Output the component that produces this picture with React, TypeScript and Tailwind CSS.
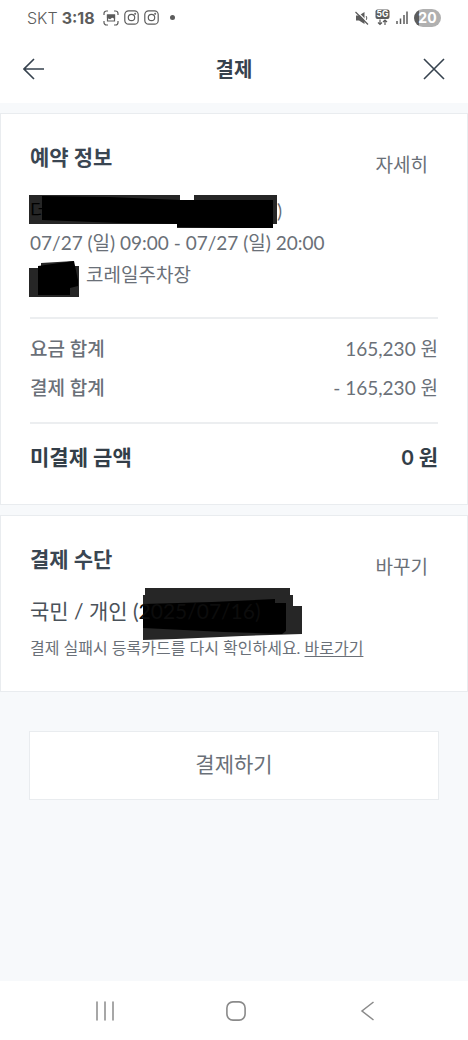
import React, { ReactNode } from 'react';

const fees = [
  { label: '요금 합계', amount: '165,230 원' },
  { label: '결제 합계', amount: '- 165,230 원' },
];

function StatusBar() {
  return (
    <div className="flex h-[35px] items-center justify-between px-[27px] text-[#5c5c5c] font-['Inter','Noto_Sans_CJK_KR',sans-serif]">
      <div className="flex items-center text-base">
        <span className="font-light">SKT</span>
        <span className="ml-1 font-bold">3:18</span>
        <svg className="ml-2" width="16" height="16" viewBox="0 0 16 16" fill="none" stroke="currentColor" strokeWidth="1.2">
          <path d="M1 5V3.5A2.5 2.5 0 0 1 3.5 1H5M11 1h1.5A2.5 2.5 0 0 1 15 3.5V5M15 11v1.5a2.5 2.5 0 0 1-2.5 2.5H11M5 15H3.5A2.5 2.5 0 0 1 1 12.5V11" />
          <path d="M4.5 5h7v6h-7z" />
          <path d="M4.5 5h7v3l-2.5-1-2 1.500-2.500-1z" fill="currentColor" />
        </svg>
        <InstagramIcon className="ml-[5px]" />
        <InstagramIcon className="ml-[5px]" />
        <span className="ml-[11px] h-[5px] w-[5px] rounded-full bg-[#5c5c5c]" />
      </div>
      <div className="flex items-center">
        <svg width="14" height="14" viewBox="0 0 14 14">
          <path d="M1 4.500h3L9.500 1v12L4 9.500H1z" fill="currentColor" />
          <path d="M11 5c1 1 1 3 0 4" stroke="currentColor" fill="none" />
          <path d="M2 0.500l12 12" stroke="#fff" strokeWidth="1.200" />
          <path d="M0.500 1l12.500 12.500" stroke="currentColor" strokeWidth="1.300" />
        </svg>
        <svg className="ml-[6px]" width="15" height="17" viewBox="0 0 15 17">
          <rect x="0.500" y="0.500" width="14" height="9.500" rx="2" fill="currentColor" />
          <text x="7.500" y="8.300" textAnchor="middle" fontSize="8.500" fontWeight="700" fill="#fff">5G</text>
          <path d="M5 10.500v5M3 13.500l2 2 2-2M10 16v-5M8 13l2-2 2 2" stroke="currentColor" fill="none" strokeWidth="1.200" />
        </svg>
        <svg className="ml-[6px]" width="12" height="13" viewBox="0 0 12 13" stroke="currentColor" strokeWidth="1.500">
          <path d="M1 10v3M4.500 7.500V13M8 4v9M11 0.500V13" />
        </svg>
        <div className="ml-[6px] flex h-[18px] w-[27px] items-center justify-center rounded-full bg-linear-to-r from-[#5c5c5c] from-20% to-[#b0b0b0] to-20% text-sm font-bold text-white">
          20
        </div>
      </div>
    </div>
  );
}

function InstagramIcon({ className }: { className?: string }) {
  return (
    <svg className={className} width="15" height="15" viewBox="0 0 15 15" fill="none" stroke="currentColor" strokeWidth="1.2">
      <rect x="0.8" y="0.8" width="13.4" height="13.4" rx="3.8" />
      <circle cx="7.5" cy="7.5" r="3.2" />
      <circle cx="11.2" cy="3.8" r="0.4" fill="currentColor" />
    </svg>
  );
}

function Card({ title, action, children }: { title: string; action: string; children: ReactNode }) {
  return (
    <section className="mt-[10px] border border-[#e9ecef] bg-white px-[29px] pt-[27px]">
      <div className="flex items-start justify-between">
        <h2 className="text-[21px] leading-8 font-bold text-[#3a4652]">{title}</h2>
        <button type="button" className="mt-2 px-[10px] text-[19px] leading-8">{action}</button>
      </div>
      {children}
    </section>
  );
}

export default function App() {
  return (
    <div className="flex min-h-screen flex-col bg-[#f7f9fb] text-[#6a7078] font-['Lato','Noto_Sans_CJK_KR',sans-serif]">
      <div className="bg-white">
        <StatusBar />
        <header className="flex h-[68px] items-center justify-between px-[23px] text-[#36424e]">
          <button type="button" aria-label="뒤로">
            <svg width="22" height="22" viewBox="0 0 22 22" fill="none" stroke="currentColor" strokeWidth="1.6">
              <path d="M21 11H1M11 1L1 11l10 10" />
            </svg>
          </button>
          <h1 className="text-[20px] leading-8 font-bold">결제</h1>
          <button type="button" aria-label="닫기">
            <svg width="22" height="22" viewBox="0 0 22 22" fill="none" stroke="currentColor" strokeWidth="1.6">
              <path d="M1 1l20 20M21 1L1 21" />
            </svg>
          </button>
        </header>
      </div>

      <main className="flex-1">
        <Card title="예약 정보" action="자세히">
          <div className="mt-[14px] text-[19px] leading-8">
            <p className="relative flex">
              <svg className="absolute top-0 -left-px" width="249" height="34" viewBox="0 0 249 34">
                <path d="M0 0H151V5H165V0H248V29H244V33H148V29H0z" fill="#262626" />
                <path d="M13 1L80 2L151 5H244V33H205L148 32V29L90 28L13 25z" fill="#000" />
              </svg>
              <span className="relative w-[247px] text-black">더</span>
              <span>)</span>
            </p>
            <p>07/27 (일) 09:00 - 07/27 (일) 20:00</p>
            <p className="relative flex">
              <svg className="absolute top-[2px] -left-px" width="51" height="37" viewBox="0 0 51 37">
                <path d="M0 7H12V2L45 0V5H50V36H0z" fill="#262626" />
                <path d="M9 5L45 0L49 19V25L41 27V34H9z" fill="#000" />
              </svg>
              <span className="ml-[56px]">코레일주차장</span>
            </p>
          </div>

          <dl className="mt-[26px] border-t-2 border-[#eceef0] text-[19px] leading-[39px]">
            <div className="border-b-2 border-[#eceef0] pt-[10px] pb-[15px]">
              {fees.map((fee) => (
                <div className="flex justify-between" key={fee.label}>
                  <dt className="font-medium">{fee.label}</dt>
                  <dd>{fee.amount}</dd>
                </div>
              ))}
            </div>
            <div className="flex justify-between pt-[13px] pb-[28px] text-[21px] font-bold text-[#333e48]">
              <dt>미결제 금액</dt>
              <dd>0 원</dd>
            </div>
          </dl>
        </Card>

        <Card title="결제 수단" action="바꾸기">
          <p className="relative mt-[12px] flex text-[21px] leading-8 text-[#4a525a]">
            <svg className="absolute -top-[7px] left-[112px]" width="161" height="52" viewBox="0 0 161 52">
              <path d="M3 0H148V7H151V18H160V46L100 48L34 51L1 52V7H3z" fill="#262626" />
              <path d="M1 16L70 14L133 11V15H144V43L140 46L82 44L1 40z" fill="#000" />
            </svg>
            <span className="relative">
              국민 / 개인 (<span className="text-[#0c0c0c]">2025/07/16)</span>
            </span>
          </p>
          <p className="mt-[5px] pb-[27px] text-base leading-8">
            결제 실패시 등록카드를 다시 확인하세요.{' '}
            <a href="#" className="underline underline-offset-2">바로가기</a>
          </p>
        </Card>

        <div className="px-[29px] pt-[39px] pb-8">
          <button type="button" className="h-[69px] w-full border border-[#e9ecef] bg-white pb-1 text-[21px]">
            결제하기
          </button>
        </div>
      </main>

      <nav className="flex h-[59px] items-center justify-between bg-white pr-[91px] pl-[95px] text-[#8a8a8a]">
        <button type="button" aria-label="최근 앱">
          <svg width="20" height="20" viewBox="0 0 20 20" stroke="currentColor" strokeWidth="1.5">
            <path d="M2 1v18M10 1v18M18 1v18" strokeLinecap="round" />
          </svg>
        </button>
        <button type="button" aria-label="홈">
          <svg width="20" height="20" viewBox="0 0 20 20" fill="none" stroke="currentColor" strokeWidth="1.6">
            <rect x="0.9" y="0.9" width="18.2" height="18.2" rx="6" />
          </svg>
        </button>
        <button type="button" aria-label="이전">
          <svg width="20" height="20" viewBox="0 0 20 20" fill="none" stroke="currentColor" strokeWidth="1.5">
            <path d="M16.500 1L5 10l11.500 9" />
          </svg>
        </button>
      </nav>
    </div>
  );
}
